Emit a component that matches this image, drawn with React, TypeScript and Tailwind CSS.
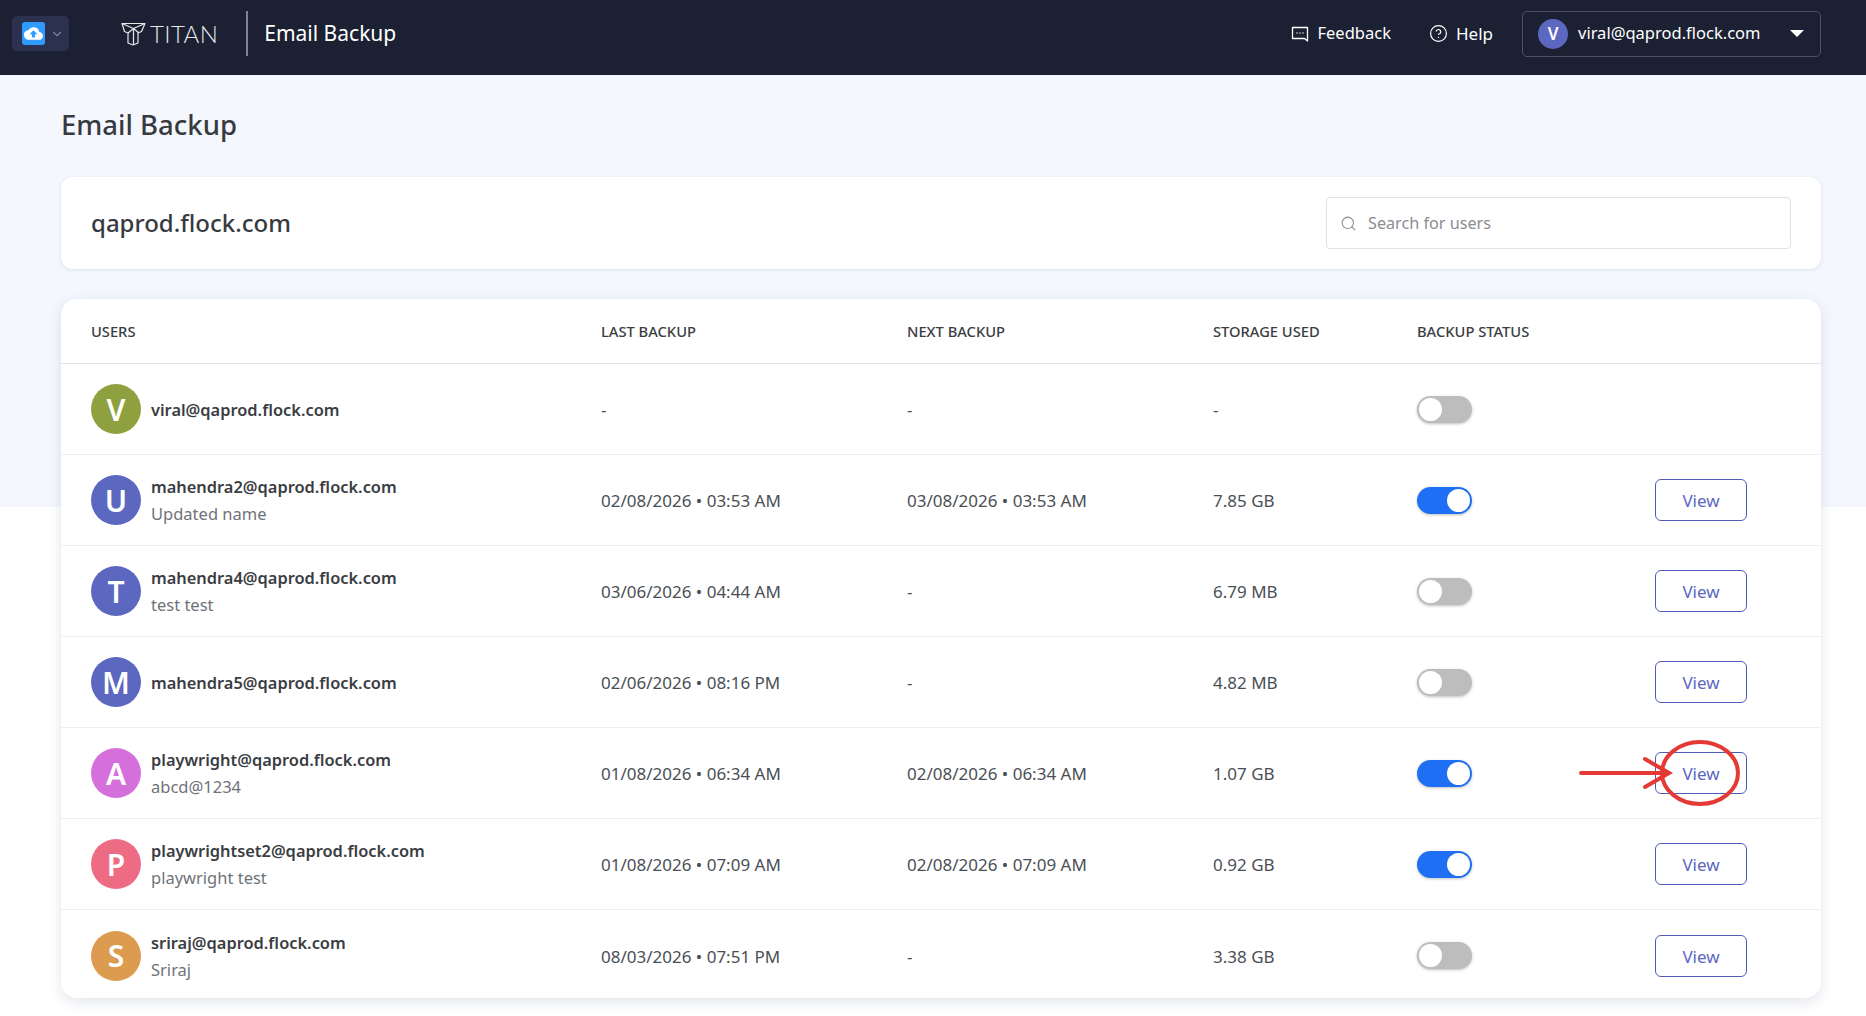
import { ChevronDown, CircleHelp, Search } from "lucide-react";
import { MdCloudUpload } from "react-icons/md";

type UserRow = {
  letter: string;
  color: string;
  email: string;
  name?: string;
  last: string;
  next: string;
  storage: string;
  on: boolean;
  view: boolean;
};

const users: UserRow[] = [
  { letter: "V", color: "bg-[#8fa03f]", email: "viral@qaprod.flock.com", last: "-", next: "-", storage: "-", on: false, view: false },
  { letter: "U", color: "bg-[#5c67c0]", email: "mahendra2@qaprod.flock.com", name: "Updated name", last: "02/08/2026 • 03:53 AM", next: "03/08/2026 • 03:53 AM", storage: "7.85 GB", on: true, view: true },
  { letter: "T", color: "bg-[#5c67c0]", email: "mahendra4@qaprod.flock.com", name: "test test", last: "03/06/2026 • 04:44 AM", next: "-", storage: "6.79 MB", on: false, view: true },
  { letter: "M", color: "bg-[#5c67c0]", email: "mahendra5@qaprod.flock.com", last: "02/06/2026 • 08:16 PM", next: "-", storage: "4.82 MB", on: false, view: true },
  { letter: "A", color: "bg-[#d56fdc]", email: "playwright@qaprod.flock.com", name: "abcd@1234", last: "01/08/2026 • 06:34 AM", next: "02/08/2026 • 06:34 AM", storage: "1.07 GB", on: true, view: true },
  { letter: "P", color: "bg-[#ee6b84]", email: "playwrightset2@qaprod.flock.com", name: "playwright test", last: "01/08/2026 • 07:09 AM", next: "02/08/2026 • 07:09 AM", storage: "0.92 GB", on: true, view: true },
  { letter: "S", color: "bg-[#dd9b4f]", email: "sriraj@qaprod.flock.com", name: "Sriraj", last: "08/03/2026 • 07:51 PM", next: "-", storage: "3.38 GB", on: false, view: true },
];

const gridCols = "grid grid-cols-[510px_306px_306px_204px_238px_92px]";

const TitanLogo = () => (
  <svg width="25" height="24" viewBox="0 0 25 24" fill="none" stroke="#e5e7eb" strokeWidth="1.2" strokeLinejoin="round">
    <path d="M1 1.5h23l-3.5 8-3.5 1.5v10l-5 2-5-2V11L3.5 9.5z" />
    <path d="M1 1.5l11.5 5 11.5-5M12.5 6.5V23M7 11l5.5-4.5L18 11" />
  </svg>
);

const FeedbackIcon = () => (
  <svg width="18" height="18" viewBox="0 0 18 18" fill="none" stroke="#fff" strokeWidth="1.3" strokeLinejoin="round">
    <path d="M1.5 2.5h15v13.5l-3-2.5h-12z" />
    <path d="M5.5 8h1M8.5 8h1M11.5 8h1" strokeWidth="1.4" />
  </svg>
);

const Toggle = ({ on }: { on: boolean }) => (
  <div className={`flex h-[27px] w-[55px] items-center rounded-full px-[2px] shadow-[0_1px_3px_rgba(0,0,0,0.25)] ${on ? "justify-end bg-[#1f6ff5]" : "justify-start bg-[#bdbdbd]"}`}>
    <div className="h-[23px] w-[23px] rounded-full bg-white" />
  </div>
);

const UserLine = ({ user }: { user: UserRow }) => (
  <div className={`${gridCols} h-[91px] items-center border-b border-[#eceef2] pl-[30px] last:h-[88px] last:border-b-0 last:pt-[3px]`}>
    <div className="flex items-center gap-[10px]">
      <div className={`flex h-[50px] w-[50px] items-center justify-center rounded-full text-[30px] font-semibold text-white ${user.color}`}>
        {user.letter}
      </div>
      <div className="flex flex-col">
        <span className="text-[16.4px] leading-[27px] font-semibold text-[#3a3d42]">{user.email}</span>
        {user.name && <span className="text-[16.5px] leading-[27px] text-[#6f7379]">{user.name}</span>}
      </div>
    </div>
    <span className="pt-[2px] text-[17px] text-[#4b4f55]">{user.last}</span>
    <span className="pt-[2px] text-[17px] text-[#4b4f55]">{user.next}</span>
    <span className="pt-[2px] text-[17px] text-[#4b4f55]">{user.storage}</span>
    <Toggle on={user.on} />
    {user.view && (
      <button className="h-[42px] w-[92px] rounded-[6px] border border-[#4f5bb8] pt-[2px] text-[17px] text-[#5c67c0]">View</button>
    )}
  </div>
);

const App = () => {
  return (
    <div className="relative min-h-[1016px] bg-white font-['Noto_Sans',sans-serif]">
      <header className="flex h-[75px] items-center bg-[#1c2033] pr-[45px] pb-[8px] pl-[12px]">
        <div className="flex h-[35px] w-[57px] items-center gap-[5px] rounded-[5px] bg-[#2c3150] pl-[10px]">
          <div className="flex h-[23px] w-[23px] items-center justify-center rounded-[3px] bg-[#2f9bff]">
            <MdCloudUpload className="text-[19px] text-white" />
          </div>
          <ChevronDown size={14} className="text-[#7b8098]" />
        </div>
        <div className="ml-[52px] flex items-center gap-[4px]">
          <TitanLogo />
          <span className="font-['Lato',sans-serif] text-[24px] font-light tracking-[0.4px] text-[#e5e7eb]">TITAN</span>
        </div>
        <div className="ml-[28px] h-[45px] w-[2px] bg-[#80838f]" />
        <span className="ml-[16px] text-[21px] text-white">Email Backup</span>

        <div className="ml-auto flex items-center gap-[9px]">
          <FeedbackIcon />
          <span className="text-[16.5px] text-white">Feedback</span>
        </div>
        <div className="ml-[38px] flex items-center gap-[8px]">
          <CircleHelp size={19} strokeWidth={1.5} className="text-white" />
          <span className="text-[17px] text-white">Help</span>
        </div>
        <div className="ml-[29px] flex h-[46px] w-[299px] items-center rounded-[5px] border border-[#4d5268] pr-[16px] pl-[15px]">
          <div className="flex h-[30px] w-[30px] items-center justify-center rounded-full bg-[#5c67c0] text-[17px] font-semibold text-white">V</div>
          <span className="ml-[10px] text-[16.5px] text-white">viral@qaprod.flock.com</span>
          <div className="ml-auto h-0 w-0 border-x-[7px] border-t-[7px] border-x-transparent border-t-white" />
        </div>
      </header>

      <main className="bg-[linear-gradient(#f4f7fe_432px,#fff_432px)] pt-[31px] pr-[45px] pl-[61px]">
        <h1 className="text-[27.5px] leading-[38px] font-medium text-[#373a3f]">Email Backup</h1>

        <section className="mt-[33px] flex h-[92px] items-center justify-between rounded-[12px] bg-white pr-[30px] pl-[30px] shadow-[0_1px_4px_rgba(60,70,110,0.12)]">
          <h2 className="text-[24px] font-medium text-[#373a3f]">qaprod.flock.com</h2>
          <div className="flex h-[52px] w-[465px] items-center gap-[11px] rounded-[4px] border border-[#dfe1e6] bg-white pl-[13px]">
            <Search size={17} strokeWidth={1.5} className="text-[#8a8d93]" />
            <span className="text-[16.2px] text-[#8a8d93]">Search for users</span>
          </div>
        </section>

        <section className="mt-[30px] rounded-[16px] bg-white shadow-[0_4px_14px_rgba(60,70,110,0.14)]">
          <div className={`${gridCols} h-[65px] items-center border-b border-[#dfe2e8] pl-[30px] text-[14.7px] font-medium text-[#3a3d42]`}>
            <span>USERS</span>
            <span>LAST BACKUP</span>
            <span>NEXT BACKUP</span>
            <span>STORAGE USED</span>
            <span>BACKUP STATUS</span>
          </div>
          {users.map((user) => (
            <UserLine key={user.email} user={user} />
          ))}
        </section>
      </main>

      {/* red annotation drawn over the screenshot */}
      <svg className="absolute top-[730px] left-[1575px]" width="180" height="90" viewBox="0 0 180 90" fill="none" stroke="#e53935" strokeLinecap="round">
        <path d="M6 43h87" strokeWidth="4" />
        <path d="M70 29l24 14-24 14" strokeWidth="4" />
        <ellipse cx="125" cy="43" rx="38" ry="31" strokeWidth="4" />
      </svg>
    </div>
  );
};

export default App;
